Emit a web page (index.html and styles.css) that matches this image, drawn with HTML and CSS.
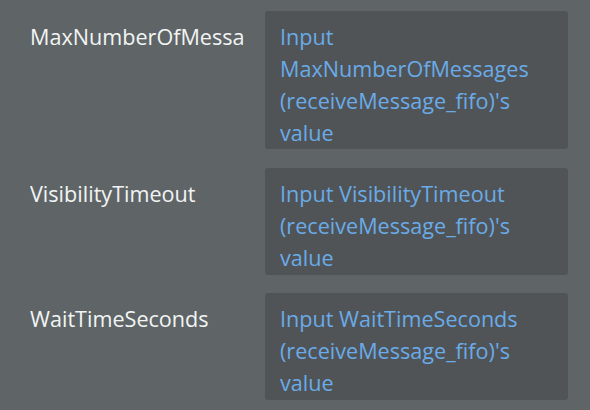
FILE: index.html
```html
<!DOCTYPE html>
<html>
<head>
<meta charset="utf-8">
<link rel="stylesheet" href="styles.css">
</head>
<body>
<div class="form">
  <div class="row">
    <div class="label">MaxNumberOfMessa</div>
    <div class="field">Input MaxNumberOfMessages (receiveMessage_fifo)'s value</div>
  </div>
  <div class="row">
    <div class="label">VisibilityTimeout</div>
    <div class="field">Input VisibilityTimeout (receiveMessage_fifo)'s value</div>
  </div>
  <div class="row">
    <div class="label">WaitTimeSeconds</div>
    <div class="field">Input WaitTimeSeconds (receiveMessage_fifo)'s value</div>
  </div>
</div>
</body>
</html>
```

FILE: styles.css
```css
html, body {
  margin: 0;
  padding: 0;
  background: #5f6567;
  width: 590px;
  height: 410px;
  overflow: hidden;
}
.form {
  display: flex;
  flex-direction: column;
  gap: 18.67px;
  padding: 10.67px 0 0 30px;
  font-family: "Open Sans", "DejaVu Sans", sans-serif;
  font-size: 21.6px;
  line-height: 32px;
}
.row {
  display: flex;
  align-items: flex-start;
}
.label {
  width: 220px;
  flex: none;
  margin-right: 15px;
  padding-top: 10px;
  color: #f2f4f4;
  white-space: nowrap;
  overflow: hidden;
}
.field {
  width: 273px;
  flex: none;
  background: #505456;
  border-radius: 3px;
  padding: 10px 15px 0.67px 15px;
  color: #6aabe8;
}
```
